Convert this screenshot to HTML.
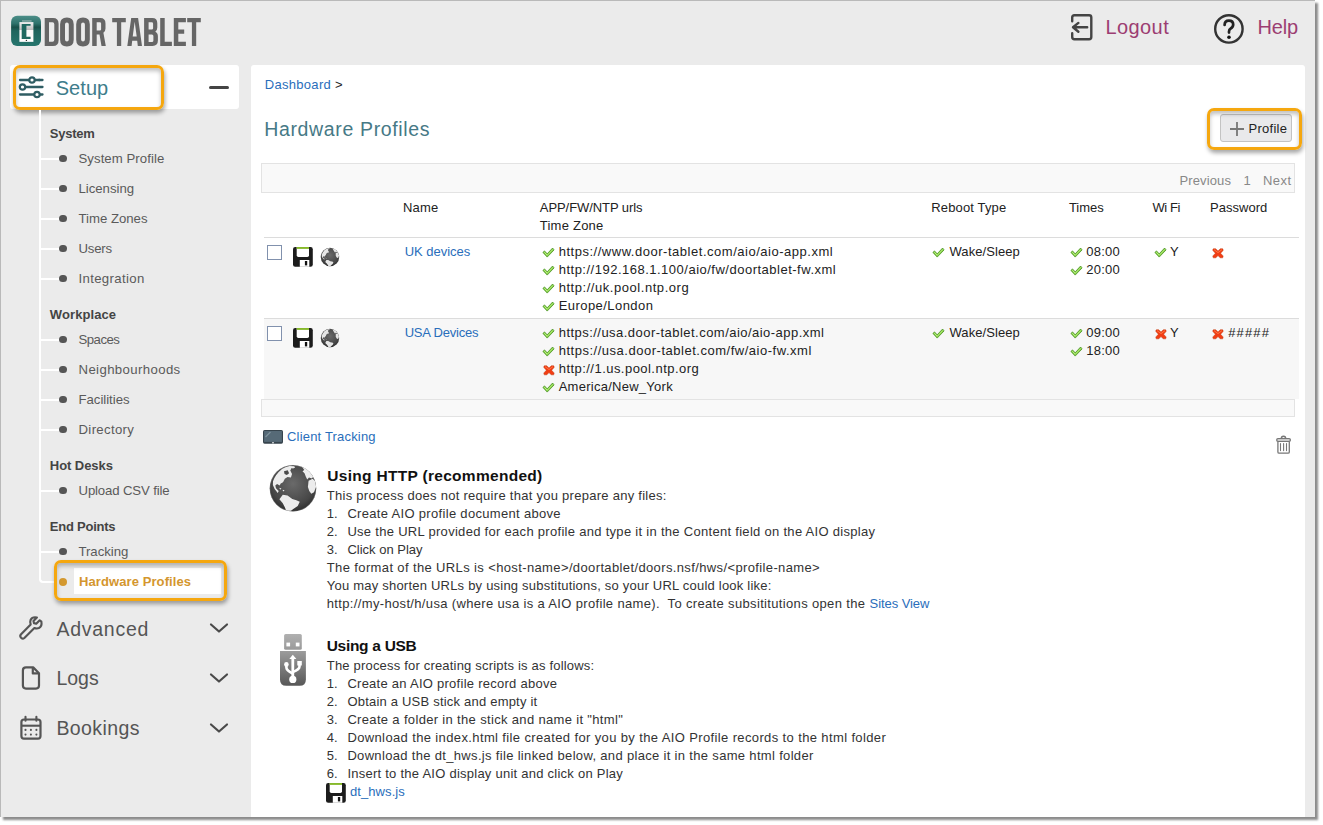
<!DOCTYPE html>
<html><head><meta charset="utf-8"><title>Hardware Profiles</title>
<style>
*{box-sizing:border-box;margin:0;padding:0}
html,body{width:1323px;height:825px;overflow:hidden;background:#fff;font-family:"Liberation Sans",sans-serif}
.abs{position:absolute}
.t{position:absolute;white-space:nowrap;line-height:1}
#frame{position:absolute;left:0;top:0;width:1315px;height:817px;background:#ebebeb;border-top:1px solid #b9b9b9;border-left:1px solid #b9b9b9;box-shadow:3px 3px 2px rgba(0,0,0,.45)}
.card{position:absolute;left:10px;top:65px;width:229px;height:44px;background:#fff;border-radius:3px}
.hl{position:absolute;border:3px solid #f5a70f;border-radius:7px;box-shadow:1px 3px 4px rgba(0,0,0,.35), inset 0 3px 4px rgba(0,0,0,.25)}
#main{position:absolute;left:251px;top:65px;width:1054px;height:752px;background:#fff;border-radius:3px 3px 0 0}
</style></head><body>
<div id="frame"></div>
<svg class="abs" style="left:10px;top:15px" width="32" height="32" viewBox="0 0 32 32">
<defs><linearGradient id="lg1" x1="0" y1="0" x2="0" y2="1"><stop offset="0" stop-color="#4c8e88"/><stop offset=".25" stop-color="#2f746d"/><stop offset=".38" stop-color="#185049"/><stop offset=".5" stop-color="#1f655e"/><stop offset="1" stop-color="#26756d"/></linearGradient>
<linearGradient id="lg2" x1="0" y1="0" x2="0" y2="1"><stop offset="0" stop-color="#f2f2f2"/><stop offset=".38" stop-color="#bdbdbd"/><stop offset=".42" stop-color="#fafafa"/><stop offset="1" stop-color="#fff"/></linearGradient></defs>
<rect x="1.1" y="0.8" width="29.9" height="30.1" rx="6" fill="url(#lg1)"/>
<rect x="9.4" y="7.1" width="14" height="19.75" fill="url(#lg2)"/>
<path d="M11.7 9 H20.6 V10.7 H16.4 V21.8 H20.6 V23.9 H11.7 Z" fill="#1f6961"/>
<circle cx="16.4" cy="25.4" r=".7" fill="#333"/>
<path d="M12.5 6 h1 M14.5 6 h1 M16.5 6 h1 M18.5 6 h1 M20.5 6 h.8" stroke="#d8d8d8" stroke-width="1.6"/>
</svg>
<svg class="abs" style="left:43px;top:16.9px" width="162" height="30" viewBox="0 -1 162 30" overflow="visible"><g fill="#666" fill-rule="evenodd"><path transform="translate(1.7,0)" d="M0,0 H8.3 Q13.9,0 13.9,5.8 V22.2 Q13.9,28 8.3,28 H0 Z M4.3,4.2 V23.8 H7.8 Q9.6,23.8 9.6,21.8 V6.2 Q9.6,4.2 7.8,4.2 Z"/><path transform="translate(17.1,0)" d="M0,6.3 Q0,-0.4 6.8,-0.4 Q13.6,-0.4 13.6,6.3 V21.7 Q13.6,28.4 6.8,28.4 Q0,28.4 0,21.7 Z M4.9,6.4 Q4.9,4.5 6.8,4.5 Q8.7,4.5 8.7,6.4 V21.6 Q8.7,23.5 6.8,23.5 Q4.9,23.5 4.9,21.6 Z"/><path transform="translate(33.2,0)" d="M0,6.3 Q0,-0.4 6.8,-0.4 Q13.6,-0.4 13.6,6.3 V21.7 Q13.6,28.4 6.8,28.4 Q0,28.4 0,21.7 Z M4.9,6.4 Q4.9,4.5 6.8,4.5 Q8.7,4.5 8.7,6.4 V21.6 Q8.7,23.5 6.8,23.5 Q4.9,23.5 4.9,21.6 Z"/><path transform="translate(49.2,0)" d="M0,0 H8.2 Q13.3,0 13.3,5.5 V10.6 Q13.3,13.6 11.2,14.8 L13.6,28 H9.3 L7.3,16.6 H4.5 V28 H0 Z M4.5,4.2 V12.6 H7.6 Q8.9,12.6 8.9,11.2 V5.6 Q8.9,4.2 7.6,4.2 Z"/><path transform="translate(69.2,0)" d="M0,0 H13.6 V4.2 H9.0 V28 H4.7 V4.2 H0 Z"/><path transform="translate(84.3,0)" d="M3.9,0 H10.8 L14.7,28 H10.5 L9.9,22.7 H4.9 L4.3,28 H0 Z M5.4,18.6 H9.4 L7.4,3.8 Z"/><path transform="translate(101.1,0)" d="M0,0 H8.2 Q13.2,0 13.2,5.3 V9.6 Q13.2,12.6 11.2,13.7 Q13.8,14.9 13.8,18.4 V22.6 Q13.8,28 8.4,28 H0 Z M4.5,4.3 V11.6 H7.6 Q9,11.6 9,10.2 V5.7 Q9,4.3 7.6,4.3 Z M4.5,16.4 V24.1 H7.8 Q9.3,24.1 9.3,22.6 V17.9 Q9.3,16.4 7.8,16.4 Z"/><path transform="translate(117.2,0)" d="M0,0 H4.5 V23.8 H11.7 V28 H0 Z"/><path transform="translate(130.8,0)" d="M0,0 H12.1 V4.2 H4.5 V11.6 H10.4 V15.7 H4.5 V23.8 H12.1 V28 H0 Z"/><path transform="translate(144.2,0)" d="M0,0 H13.6 V4.2 H9.0 V28 H4.7 V4.2 H0 Z"/></g></svg>
<svg class="abs" style="left:1069px;top:12px" width="28" height="32" viewBox="0 0 28 32">
<path d="M3.2,9.2 V5.5 Q3.2,3.3 5.4,3.3 H20.1 Q22.3,3.3 22.3,5.5 V25.1 Q22.3,27.3 20.1,27.3 H5.4 Q3.2,27.3 3.2,25.1 V21.3" fill="none" stroke="#444" stroke-width="2.4" stroke-linecap="round"/>
<path d="M18.2,15.3 H4 M9.4,10.9 L4,15.3 L9.4,19.7" fill="none" stroke="#444" stroke-width="2.4" stroke-linecap="round" stroke-linejoin="round"/>
</svg>
<div class="t" style="left:1105.4px;top:17.37px;font-size:20px;color:#9c3d72;letter-spacing:0.425px;">Logout</div>
<svg class="abs" style="left:1212px;top:12px" width="34" height="34" viewBox="0 0 34 34">
<circle cx="16.9" cy="16.9" r="13.7" fill="none" stroke="#333" stroke-width="2.4"/>
<path d="M12.6,12.9 Q12.6,8.6 16.9,8.6 Q21.2,8.6 21.2,12.6 Q21.2,15.2 18.7,16.5 Q17,17.4 17,19.6 V20.6" fill="none" stroke="#222" stroke-width="2.7" stroke-linecap="round"/>
<circle cx="17" cy="25.2" r="1.8" fill="#111"/>
</svg>
<div class="t" style="left:1257.5px;top:17.37px;font-size:20px;color:#9c3d72;letter-spacing:-0.211px;">Help</div>
<div class="card"></div>
<svg class="abs" style="left:17px;top:74px" width="30" height="26" viewBox="0 0 30 26">
<g fill="none" stroke="#2f5d63" stroke-width="2.3" stroke-linecap="round">
<path d="M3 6H22.5M3 13H25.5M3 20.5H25.5"/>
<path d="M22 6H25.5"/>
</g>
<g fill="#fff" stroke="#2f5d63" stroke-width="2.2"><circle cx="15" cy="6" r="2.7"/><circle cx="5.5" cy="13" r="2.7"/><circle cx="20" cy="20.5" r="2.7"/></g>
</svg>
<div class="t" style="left:55.7px;top:78.07px;font-size:20px;color:#3e7d8b;letter-spacing:0.058px;">Setup</div>
<div class="abs" style="left:209px;top:86px;width:20px;height:3px;background:#444;border-radius:1.5px"></div>
<div class="hl" style="left:13px;top:65px;width:151px;height:45px"></div>
<div class="abs" style="left:39px;top:110px;width:2px;height:470px;background:#fff"></div>
<div class="abs" style="left:39px;top:572px;width:15px;height:11px;border-left:2px solid #fff;border-bottom:2px solid #fff;border-bottom-left-radius:4px"></div>
<div class="t" style="left:49.8px;top:126.70px;font-size:13px;color:#444;font-weight:bold;letter-spacing:-0.230px;">System</div>
<div class="t" style="left:49.8px;top:308.00px;font-size:13px;color:#444;font-weight:bold;letter-spacing:0.099px;">Workplace</div>
<div class="t" style="left:49.8px;top:458.80px;font-size:13px;color:#444;font-weight:bold;letter-spacing:-0.060px;">Hot Desks</div>
<div class="t" style="left:49.8px;top:519.80px;font-size:13px;color:#444;font-weight:bold;letter-spacing:-0.232px;">End Points</div>
<div class="abs" style="left:41px;top:157.6px;width:20px;height:2px;background:#fff"></div>
<div class="abs" style="left:59px;top:154.9px;width:7.5px;height:7.5px;border-radius:50%;background:#555"></div>
<div class="t" style="left:78.5px;top:151.63px;font-size:13.2px;color:#5a5a5a;letter-spacing:0.054px;">System Profile</div>
<div class="abs" style="left:41px;top:187.6px;width:20px;height:2px;background:#fff"></div>
<div class="abs" style="left:59px;top:184.9px;width:7.5px;height:7.5px;border-radius:50%;background:#555"></div>
<div class="t" style="left:78.5px;top:181.63px;font-size:13.2px;color:#5a5a5a;letter-spacing:-0.022px;">Licensing</div>
<div class="abs" style="left:41px;top:217.6px;width:20px;height:2px;background:#fff"></div>
<div class="abs" style="left:59px;top:214.9px;width:7.5px;height:7.5px;border-radius:50%;background:#555"></div>
<div class="t" style="left:78.5px;top:211.63px;font-size:13.2px;color:#5a5a5a;letter-spacing:-0.011px;">Time Zones</div>
<div class="abs" style="left:41px;top:247.6px;width:20px;height:2px;background:#fff"></div>
<div class="abs" style="left:59px;top:244.9px;width:7.5px;height:7.5px;border-radius:50%;background:#555"></div>
<div class="t" style="left:78.5px;top:241.63px;font-size:13.2px;color:#5a5a5a;letter-spacing:-0.218px;">Users</div>
<div class="abs" style="left:41px;top:277.6px;width:20px;height:2px;background:#fff"></div>
<div class="abs" style="left:59px;top:274.9px;width:7.5px;height:7.5px;border-radius:50%;background:#555"></div>
<div class="t" style="left:78.5px;top:271.63px;font-size:13.2px;color:#5a5a5a;letter-spacing:0.342px;">Integration</div>
<div class="abs" style="left:41px;top:338.6px;width:20px;height:2px;background:#fff"></div>
<div class="abs" style="left:59px;top:335.9px;width:7.5px;height:7.5px;border-radius:50%;background:#555"></div>
<div class="t" style="left:78.5px;top:332.63px;font-size:13.2px;color:#5a5a5a;letter-spacing:-0.526px;">Spaces</div>
<div class="abs" style="left:41px;top:368.6px;width:20px;height:2px;background:#fff"></div>
<div class="abs" style="left:59px;top:365.9px;width:7.5px;height:7.5px;border-radius:50%;background:#555"></div>
<div class="t" style="left:78.5px;top:362.63px;font-size:13.2px;color:#5a5a5a;letter-spacing:0.379px;">Neighbourhoods</div>
<div class="abs" style="left:41px;top:398.6px;width:20px;height:2px;background:#fff"></div>
<div class="abs" style="left:59px;top:395.9px;width:7.5px;height:7.5px;border-radius:50%;background:#555"></div>
<div class="t" style="left:78.5px;top:392.63px;font-size:13.2px;color:#5a5a5a;letter-spacing:-0.027px;">Facilities</div>
<div class="abs" style="left:41px;top:428.6px;width:20px;height:2px;background:#fff"></div>
<div class="abs" style="left:59px;top:425.9px;width:7.5px;height:7.5px;border-radius:50%;background:#555"></div>
<div class="t" style="left:78.5px;top:422.63px;font-size:13.2px;color:#5a5a5a;letter-spacing:0.336px;">Directory</div>
<div class="abs" style="left:41px;top:489.6px;width:20px;height:2px;background:#fff"></div>
<div class="abs" style="left:59px;top:486.9px;width:7.5px;height:7.5px;border-radius:50%;background:#555"></div>
<div class="t" style="left:78.5px;top:483.63px;font-size:13.2px;color:#5a5a5a;letter-spacing:-0.142px;">Upload CSV file</div>
<div class="abs" style="left:41px;top:550.6px;width:20px;height:2px;background:#fff"></div>
<div class="abs" style="left:59px;top:547.9px;width:7.5px;height:7.5px;border-radius:50%;background:#555"></div>
<div class="t" style="left:78.5px;top:544.63px;font-size:13.2px;color:#5a5a5a;letter-spacing:-0.047px;">Tracking</div>
<div class="abs" style="left:74px;top:568px;width:147px;height:26px;background:#fff"></div>
<div class="abs" style="left:59.2px;top:577.6px;width:8.2px;height:8.2px;border-radius:50%;background:#d4992f"></div>
<div class="t" style="left:78.9px;top:575.00px;font-size:13px;color:#d4962e;font-weight:bold;letter-spacing:0.103px;">Hardware Profiles</div>
<div class="hl" style="left:54px;top:560.2px;width:172.8px;height:40.4px"></div>
<div class="t" style="left:56.4px;top:619.79px;font-size:19.5px;color:#555;letter-spacing:0.752px;">Advanced</div>
<svg class="abs" style="left:208px;top:622.3px" width="22" height="12" viewBox="0 0 22 12"><path d="M3 2.5 L11 9.5 L19 2.5" fill="none" stroke="#4a4a4a" stroke-width="2.2" stroke-linecap="round" stroke-linejoin="round"/></svg>
<div class="t" style="left:56.4px;top:669.49px;font-size:19.5px;color:#555;">Logs</div>
<svg class="abs" style="left:208px;top:672.0px" width="22" height="12" viewBox="0 0 22 12"><path d="M3 2.5 L11 9.5 L19 2.5" fill="none" stroke="#4a4a4a" stroke-width="2.2" stroke-linecap="round" stroke-linejoin="round"/></svg>
<div class="t" style="left:56.4px;top:719.49px;font-size:19.5px;color:#555;letter-spacing:0.411px;">Bookings</div>
<svg class="abs" style="left:208px;top:722.0px" width="22" height="12" viewBox="0 0 22 12"><path d="M3 2.5 L11 9.5 L19 2.5" fill="none" stroke="#4a4a4a" stroke-width="2.2" stroke-linecap="round" stroke-linejoin="round"/></svg>
<svg class="abs" style="left:17px;top:614px" width="28" height="28" viewBox="0 0 28 28">
<path transform="translate(13.4,13.7) scale(.93) translate(-13.5,-13.5)" d="M23.5 5.5 L19.8 9.2 L17.4 8.6 L16.8 6.2 L20.5 2.5 Q15.5 1.5 13.7 5.2 Q12.8 7.5 13.8 10 L3.2 20.8 Q1.8 22.5 3.5 24.3 Q5.3 26 7 24.6 L17.8 13.8 Q20.3 14.8 22.6 13.9 Q26.3 12.1 25.3 7 Z" fill="none" stroke="#555" stroke-width="2.3" stroke-linejoin="round"/>
</svg>
<svg class="abs" style="left:19px;top:664px" width="24" height="28" viewBox="0 0 24 28">
<path d="M7,3.4 H14.2 L20,9.2 V21.6 Q20,24.6 17,24.6 H7 Q3.9,24.6 3.9,21.6 V6.4 Q3.9,3.4 7,3.4 Z" fill="none" stroke="#555" stroke-width="2.2" stroke-linejoin="round"/>
<path d="M13.8,3.6 V9.4 H19.8" fill="none" stroke="#555" stroke-width="2.2" stroke-linejoin="round"/>
</svg>
<svg class="abs" style="left:18px;top:714px" width="28" height="28" viewBox="0 0 28 28">
<rect x="3.4" y="5.5" width="19.1" height="19.2" rx="2.6" fill="none" stroke="#555" stroke-width="2.2"/>
<path d="M3.4,11.7 H22.5" stroke="#555" stroke-width="2.1"/>
<path d="M7.5,2.8 V6.8 M18.4,2.8 V6.8" stroke="#555" stroke-width="2.1" stroke-linecap="round"/>
<g fill="#555"><circle cx="7.5" cy="15.9" r="1.05"/><circle cx="12.9" cy="15.9" r="1.05"/><circle cx="18.4" cy="15.9" r="1.05"/><circle cx="7.5" cy="20.6" r="1.05"/><circle cx="12.9" cy="20.6" r="1.05"/><circle cx="18.4" cy="20.6" r="1.05"/></g>
</svg>
<div id="main"></div>
<div class="t" style="left:264.7px;top:77.80px;font-size:13px;color:#2a6ebb;letter-spacing:0.313px;">Dashboard</div>
<div class="t" style="left:335.0px;top:77.80px;font-size:13px;color:#222;">&gt;</div>
<div class="t" style="left:264.2px;top:120.29px;font-size:19.5px;color:#467986;letter-spacing:0.651px;">Hardware Profiles</div>
<div class="abs" style="left:1220px;top:114px;width:72px;height:28px;background:#e9e9eb;border:1px solid #c3c3c3;border-radius:3px"></div>
<svg class="abs" style="left:1229px;top:121px" width="16" height="16" viewBox="0 0 16 16"><path d="M8 1V15M1 8H15" stroke="#777" stroke-width="1.8"/></svg>
<div class="t" style="left:1248.5px;top:122.00px;font-size:13px;color:#222;letter-spacing:0.275px;">Profile</div>
<div class="hl" style="left:1206.7px;top:108.2px;width:95.7px;height:41.5px"></div>
<div class="abs" style="left:261px;top:163px;width:1034px;height:30px;background:#f9f9f9;border:1px solid #e3e3e3"></div>
<div class="t" style="left:1179.4px;top:173.80px;font-size:13px;color:#888;letter-spacing:0.131px;">Previous</div>
<div class="t" style="left:1243.6px;top:173.80px;font-size:13px;color:#888;">1</div>
<div class="t" style="left:1263.0px;top:173.80px;font-size:13px;color:#888;letter-spacing:0.423px;">Next</div>
<div class="t" style="left:403.1px;top:200.80px;font-size:13px;color:#222;letter-spacing:0.140px;">Name</div>
<div class="t" style="left:539.8px;top:200.80px;font-size:13px;color:#222;letter-spacing:-0.070px;">APP/FW/NTP urls</div>
<div class="t" style="left:931.3px;top:200.80px;font-size:13px;color:#222;letter-spacing:0.142px;">Reboot Type</div>
<div class="t" style="left:1068.9px;top:200.80px;font-size:13px;color:#222;letter-spacing:-0.027px;">Times</div>
<div class="t" style="left:1152.4px;top:200.80px;font-size:13px;color:#222;letter-spacing:-0.400px;">Wi Fi</div>
<div class="t" style="left:1210.0px;top:200.80px;font-size:13px;color:#222;letter-spacing:0.031px;">Password</div>
<div class="t" style="left:539.8px;top:218.60px;font-size:13px;color:#222;letter-spacing:0.231px;">Time Zone</div>
<div class="abs" style="left:264px;top:237px;width:1035px;height:1px;background:#dcdcdc"></div>
<div class="abs" style="left:264px;top:318px;width:1035px;height:81px;background:#f7f7f7;border-top:1px solid #dcdcdc"></div>
<div class="abs" style="left:261px;top:399px;width:1034px;height:18px;background:#f9f9f9;border:1px solid #e3e3e3"></div>
<div class="abs" style="left:267px;top:245px;width:15px;height:15px;border:1px solid #8191ad;background:#fff"></div>
<svg class="abs" style="left:293px;top:247px" width="20" height="20" viewBox="0 0 20 20">
<rect x="0" y="0" width="19.8" height="19.8" rx="2.2" fill="#1c1c1c"/>
<path d="M3.7,0 H16 V8.3 Q16,10 14.3,10 H5.4 Q3.7,10 3.7,8.3 Z" fill="#fff"/>
<rect x="3.7" y="0" width="12.3" height="1.9" fill="#86b92a"/>
<rect x="6.8" y="13" width="9.5" height="6.8" fill="#fff"/>
<rect x="11.9" y="14" width="2.3" height="4.4" fill="#111"/>
</svg>
<svg class="abs" style="left:316px;top:243px" width="28" height="28" viewBox="0 0 825 825">
<circle cx="412" cy="412" r="272" fill="url(#bg)"/>
<g clip-path="url(#sgc)"><g transform="translate(412,412) scale(.793) rotate(-8) translate(-412,-402)" fill="#e6e6e6">
<path d="M118,300 Q150,200 250,118 L300,92 L362,74 L432,78 L442,100 L412,112 L392,102 L372,140 L398,192 L382,242 L332,236 L292,262 L266,312 L232,332 L216,362 L178,338 L152,362 L162,402 L202,442 L188,470 L142,412 L116,352 Z"/>
<path d="M545,82 Q650,120 712,232 L688,258 L648,242 L622,272 L602,232 L582,182 L552,152 L578,132 Z"/>
<path d="M642,292 L702,262 L742,302 L752,382 L722,462 L682,482 L652,442 L632,382 Z"/>
<path d="M212,562 L262,498 L332,508 L402,558 L462,578 L512,602 L482,662 L422,702 L382,732 L312,732 L292,682 L262,622 Z"/>
<path d="M215,395 L240,405 L235,420 L215,412 Z M262,425 L285,432 L280,448 L262,440 Z"/>
</g></g>
</svg>
<div class="t" style="left:404.7px;top:244.70px;font-size:13px;color:#2a6ebb;letter-spacing:-0.028px;">UK devices</div>
<svg class="abs" style="left:540.0px;top:244.0px" width="18" height="16" viewBox="0 0 18 16"><path d="M2.9,8.4 L4.5,6.9 L7.2,9.8 L12.6,4.0 L14.1,5.9 L7.2,13.1 Z" fill="#79c83a" stroke="#3f8a1a" stroke-width=".7" stroke-linejoin="round"/><path d="M4.3,8.2 L7.2,11.3 L13,5.3" fill="none" stroke="#c6f58c" stroke-width=".9"/></svg>
<div class="t" style="left:558.7px;top:244.70px;font-size:13px;color:#222;letter-spacing:0.520px;">https://www.door-tablet.com/aio/aio-app.xml</div>
<svg class="abs" style="left:540.0px;top:262.0px" width="18" height="16" viewBox="0 0 18 16"><path d="M2.9,8.4 L4.5,6.9 L7.2,9.8 L12.6,4.0 L14.1,5.9 L7.2,13.1 Z" fill="#79c83a" stroke="#3f8a1a" stroke-width=".7" stroke-linejoin="round"/><path d="M4.3,8.2 L7.2,11.3 L13,5.3" fill="none" stroke="#c6f58c" stroke-width=".9"/></svg>
<div class="t" style="left:558.7px;top:262.70px;font-size:13px;color:#222;letter-spacing:0.498px;">http://192.168.1.100/aio/fw/doortablet-fw.xml</div>
<svg class="abs" style="left:540.0px;top:280.0px" width="18" height="16" viewBox="0 0 18 16"><path d="M2.9,8.4 L4.5,6.9 L7.2,9.8 L12.6,4.0 L14.1,5.9 L7.2,13.1 Z" fill="#79c83a" stroke="#3f8a1a" stroke-width=".7" stroke-linejoin="round"/><path d="M4.3,8.2 L7.2,11.3 L13,5.3" fill="none" stroke="#c6f58c" stroke-width=".9"/></svg>
<div class="t" style="left:558.7px;top:280.70px;font-size:13px;color:#222;letter-spacing:0.546px;">http://uk.pool.ntp.org</div>
<svg class="abs" style="left:540.0px;top:298.0px" width="18" height="16" viewBox="0 0 18 16"><path d="M2.9,8.4 L4.5,6.9 L7.2,9.8 L12.6,4.0 L14.1,5.9 L7.2,13.1 Z" fill="#79c83a" stroke="#3f8a1a" stroke-width=".7" stroke-linejoin="round"/><path d="M4.3,8.2 L7.2,11.3 L13,5.3" fill="none" stroke="#c6f58c" stroke-width=".9"/></svg>
<div class="t" style="left:558.7px;top:298.70px;font-size:13px;color:#222;letter-spacing:0.445px;">Europe/London</div>
<svg class="abs" style="left:930.0px;top:244.0px" width="18" height="16" viewBox="0 0 18 16"><path d="M2.9,8.4 L4.5,6.9 L7.2,9.8 L12.6,4.0 L14.1,5.9 L7.2,13.1 Z" fill="#79c83a" stroke="#3f8a1a" stroke-width=".7" stroke-linejoin="round"/><path d="M4.3,8.2 L7.2,11.3 L13,5.3" fill="none" stroke="#c6f58c" stroke-width=".9"/></svg>
<div class="t" style="left:949.5px;top:244.70px;font-size:13px;color:#222;letter-spacing:0.077px;">Wake/Sleep</div>
<svg class="abs" style="left:1068.4px;top:244.0px" width="18" height="16" viewBox="0 0 18 16"><path d="M2.9,8.4 L4.5,6.9 L7.2,9.8 L12.6,4.0 L14.1,5.9 L7.2,13.1 Z" fill="#79c83a" stroke="#3f8a1a" stroke-width=".7" stroke-linejoin="round"/><path d="M4.3,8.2 L7.2,11.3 L13,5.3" fill="none" stroke="#c6f58c" stroke-width=".9"/></svg>
<div class="t" style="left:1086.3px;top:244.70px;font-size:13px;color:#222;letter-spacing:0.242px;">08:00</div>
<svg class="abs" style="left:1068.4px;top:262.0px" width="18" height="16" viewBox="0 0 18 16"><path d="M2.9,8.4 L4.5,6.9 L7.2,9.8 L12.6,4.0 L14.1,5.9 L7.2,13.1 Z" fill="#79c83a" stroke="#3f8a1a" stroke-width=".7" stroke-linejoin="round"/><path d="M4.3,8.2 L7.2,11.3 L13,5.3" fill="none" stroke="#c6f58c" stroke-width=".9"/></svg>
<div class="t" style="left:1086.3px;top:262.70px;font-size:13px;color:#222;letter-spacing:0.242px;">20:00</div>
<svg class="abs" style="left:1152.1px;top:244.0px" width="18" height="16" viewBox="0 0 18 16"><path d="M2.9,8.4 L4.5,6.9 L7.2,9.8 L12.6,4.0 L14.1,5.9 L7.2,13.1 Z" fill="#79c83a" stroke="#3f8a1a" stroke-width=".7" stroke-linejoin="round"/><path d="M4.3,8.2 L7.2,11.3 L13,5.3" fill="none" stroke="#c6f58c" stroke-width=".9"/></svg>
<div class="t" style="left:1170.0px;top:244.70px;font-size:13px;color:#222;">Y</div>
<svg class="abs" style="left:1208.0px;top:244.0px" width="18" height="16" viewBox="0 0 18 16"><path d="M4.9,5.2 L5.5,4.7 L7.6,4.7 L10,6.9 L12.4,4.7 L14.5,4.7 L15.05,5.2 L15.05,6.6 L12.6,9.2 L15.05,11.9 L15.05,13.3 L14.4,13.85 L12.2,13.85 L10,11.6 L7.8,13.85 L5.6,13.85 L4.9,13.3 L4.9,11.9 L7.4,9.2 L4.9,6.6 Z" fill="#f23d14" stroke="#b83000" stroke-width=".45" stroke-linejoin="round"/><path d="M6,5.6 L10,8.6 L14,5.6" fill="none" stroke="#ff8550" stroke-width=".8"/></svg>
<div class="abs" style="left:267px;top:326px;width:15px;height:15px;border:1px solid #8191ad;background:#fff"></div>
<svg class="abs" style="left:293px;top:328px" width="20" height="20" viewBox="0 0 20 20">
<rect x="0" y="0" width="19.8" height="19.8" rx="2.2" fill="#1c1c1c"/>
<path d="M3.7,0 H16 V8.3 Q16,10 14.3,10 H5.4 Q3.7,10 3.7,8.3 Z" fill="#fff"/>
<rect x="3.7" y="0" width="12.3" height="1.9" fill="#86b92a"/>
<rect x="6.8" y="13" width="9.5" height="6.8" fill="#fff"/>
<rect x="11.9" y="14" width="2.3" height="4.4" fill="#111"/>
</svg>
<svg class="abs" style="left:316px;top:324px" width="28" height="28" viewBox="0 0 825 825">
<circle cx="412" cy="412" r="272" fill="url(#bg)"/>
<g clip-path="url(#sgc)"><g transform="translate(412,412) scale(.793) rotate(-8) translate(-412,-402)" fill="#e6e6e6">
<path d="M118,300 Q150,200 250,118 L300,92 L362,74 L432,78 L442,100 L412,112 L392,102 L372,140 L398,192 L382,242 L332,236 L292,262 L266,312 L232,332 L216,362 L178,338 L152,362 L162,402 L202,442 L188,470 L142,412 L116,352 Z"/>
<path d="M545,82 Q650,120 712,232 L688,258 L648,242 L622,272 L602,232 L582,182 L552,152 L578,132 Z"/>
<path d="M642,292 L702,262 L742,302 L752,382 L722,462 L682,482 L652,442 L632,382 Z"/>
<path d="M212,562 L262,498 L332,508 L402,558 L462,578 L512,602 L482,662 L422,702 L382,732 L312,732 L292,682 L262,622 Z"/>
<path d="M215,395 L240,405 L235,420 L215,412 Z M262,425 L285,432 L280,448 L262,440 Z"/>
</g></g>
</svg>
<div class="t" style="left:404.7px;top:325.60px;font-size:13px;color:#2a6ebb;letter-spacing:-0.206px;">USA Devices</div>
<svg class="abs" style="left:540.0px;top:324.9px" width="18" height="16" viewBox="0 0 18 16"><path d="M2.9,8.4 L4.5,6.9 L7.2,9.8 L12.6,4.0 L14.1,5.9 L7.2,13.1 Z" fill="#79c83a" stroke="#3f8a1a" stroke-width=".7" stroke-linejoin="round"/><path d="M4.3,8.2 L7.2,11.3 L13,5.3" fill="none" stroke="#c6f58c" stroke-width=".9"/></svg>
<div class="t" style="left:558.7px;top:325.60px;font-size:13px;color:#222;letter-spacing:0.465px;">https://usa.door-tablet.com/aio/aio-app.xml</div>
<svg class="abs" style="left:540.0px;top:342.9px" width="18" height="16" viewBox="0 0 18 16"><path d="M2.9,8.4 L4.5,6.9 L7.2,9.8 L12.6,4.0 L14.1,5.9 L7.2,13.1 Z" fill="#79c83a" stroke="#3f8a1a" stroke-width=".7" stroke-linejoin="round"/><path d="M4.3,8.2 L7.2,11.3 L13,5.3" fill="none" stroke="#c6f58c" stroke-width=".9"/></svg>
<div class="t" style="left:558.7px;top:343.60px;font-size:13px;color:#222;letter-spacing:0.517px;">https://usa.door-tablet.com/fw/aio-fw.xml</div>
<svg class="abs" style="left:539.0px;top:360.9px" width="18" height="16" viewBox="0 0 18 16"><path d="M4.9,5.2 L5.5,4.7 L7.6,4.7 L10,6.9 L12.4,4.7 L14.5,4.7 L15.05,5.2 L15.05,6.6 L12.6,9.2 L15.05,11.9 L15.05,13.3 L14.4,13.85 L12.2,13.85 L10,11.6 L7.8,13.85 L5.6,13.85 L4.9,13.3 L4.9,11.9 L7.4,9.2 L4.9,6.6 Z" fill="#f23d14" stroke="#b83000" stroke-width=".45" stroke-linejoin="round"/><path d="M6,5.6 L10,8.6 L14,5.6" fill="none" stroke="#ff8550" stroke-width=".8"/></svg>
<div class="t" style="left:558.7px;top:361.60px;font-size:13px;color:#222;letter-spacing:0.462px;">http://1.us.pool.ntp.org</div>
<svg class="abs" style="left:540.0px;top:378.9px" width="18" height="16" viewBox="0 0 18 16"><path d="M2.9,8.4 L4.5,6.9 L7.2,9.8 L12.6,4.0 L14.1,5.9 L7.2,13.1 Z" fill="#79c83a" stroke="#3f8a1a" stroke-width=".7" stroke-linejoin="round"/><path d="M4.3,8.2 L7.2,11.3 L13,5.3" fill="none" stroke="#c6f58c" stroke-width=".9"/></svg>
<div class="t" style="left:558.7px;top:379.60px;font-size:13px;color:#222;letter-spacing:0.262px;">America/New_York</div>
<svg class="abs" style="left:930.0px;top:324.9px" width="18" height="16" viewBox="0 0 18 16"><path d="M2.9,8.4 L4.5,6.9 L7.2,9.8 L12.6,4.0 L14.1,5.9 L7.2,13.1 Z" fill="#79c83a" stroke="#3f8a1a" stroke-width=".7" stroke-linejoin="round"/><path d="M4.3,8.2 L7.2,11.3 L13,5.3" fill="none" stroke="#c6f58c" stroke-width=".9"/></svg>
<div class="t" style="left:949.5px;top:325.60px;font-size:13px;color:#222;letter-spacing:0.077px;">Wake/Sleep</div>
<svg class="abs" style="left:1068.4px;top:324.9px" width="18" height="16" viewBox="0 0 18 16"><path d="M2.9,8.4 L4.5,6.9 L7.2,9.8 L12.6,4.0 L14.1,5.9 L7.2,13.1 Z" fill="#79c83a" stroke="#3f8a1a" stroke-width=".7" stroke-linejoin="round"/><path d="M4.3,8.2 L7.2,11.3 L13,5.3" fill="none" stroke="#c6f58c" stroke-width=".9"/></svg>
<div class="t" style="left:1086.3px;top:325.60px;font-size:13px;color:#222;letter-spacing:0.242px;">09:00</div>
<svg class="abs" style="left:1068.4px;top:342.9px" width="18" height="16" viewBox="0 0 18 16"><path d="M2.9,8.4 L4.5,6.9 L7.2,9.8 L12.6,4.0 L14.1,5.9 L7.2,13.1 Z" fill="#79c83a" stroke="#3f8a1a" stroke-width=".7" stroke-linejoin="round"/><path d="M4.3,8.2 L7.2,11.3 L13,5.3" fill="none" stroke="#c6f58c" stroke-width=".9"/></svg>
<div class="t" style="left:1086.3px;top:343.60px;font-size:13px;color:#222;letter-spacing:0.242px;">18:00</div>
<svg class="abs" style="left:1151.1px;top:324.9px" width="18" height="16" viewBox="0 0 18 16"><path d="M4.9,5.2 L5.5,4.7 L7.6,4.7 L10,6.9 L12.4,4.7 L14.5,4.7 L15.05,5.2 L15.05,6.6 L12.6,9.2 L15.05,11.9 L15.05,13.3 L14.4,13.85 L12.2,13.85 L10,11.6 L7.8,13.85 L5.6,13.85 L4.9,13.3 L4.9,11.9 L7.4,9.2 L4.9,6.6 Z" fill="#f23d14" stroke="#b83000" stroke-width=".45" stroke-linejoin="round"/><path d="M6,5.6 L10,8.6 L14,5.6" fill="none" stroke="#ff8550" stroke-width=".8"/></svg>
<div class="t" style="left:1170.0px;top:325.60px;font-size:13px;color:#222;">Y</div>
<svg class="abs" style="left:1208.0px;top:324.9px" width="18" height="16" viewBox="0 0 18 16"><path d="M4.9,5.2 L5.5,4.7 L7.6,4.7 L10,6.9 L12.4,4.7 L14.5,4.7 L15.05,5.2 L15.05,6.6 L12.6,9.2 L15.05,11.9 L15.05,13.3 L14.4,13.85 L12.2,13.85 L10,11.6 L7.8,13.85 L5.6,13.85 L4.9,13.3 L4.9,11.9 L7.4,9.2 L4.9,6.6 Z" fill="#f23d14" stroke="#b83000" stroke-width=".45" stroke-linejoin="round"/><path d="M6,5.6 L10,8.6 L14,5.6" fill="none" stroke="#ff8550" stroke-width=".8"/></svg>
<div class="t" style="left:1228.2px;top:325.60px;font-size:13px;color:#222;letter-spacing:1.162px;">#####</div>
<svg class="abs" style="left:263px;top:430px" width="20" height="14" viewBox="0 0 20 14">
<rect x="0" y="0" width="20" height="13.7" rx="1.6" fill="#37444d"/>
<rect x="1.1" y="1" width="17.8" height="10.9" fill="#566a77"/>
<path d="M2.5,7 L7.5,2" stroke="#8fa2ad" stroke-width="1.2" opacity=".7"/>
<rect x="9" y="12.1" width="2" height="1.3" fill="#c8cdd0"/>
</svg>
<div class="t" style="left:287.0px;top:429.70px;font-size:13px;color:#2a6ebb;letter-spacing:0.187px;">Client Tracking</div>
<svg class="abs" style="left:1266px;top:428px" width="34" height="34" viewBox="0 0 34 34">
<path d="M15.3,10.8 Q15.3,8.3 17.5,8.3 Q19.7,8.3 19.7,10.8" fill="none" stroke="#777" stroke-width="1.4"/>
<rect x="10.7" y="10.7" width="13.7" height="2.6" rx="1.3" fill="#e4e4e4" stroke="#777" stroke-width="1.3"/>
<path d="M11.9,13.6 V24 Q11.9,25.2 13.1,25.2 H22 Q23.3,25.2 23.3,24 V13.6" fill="none" stroke="#777" stroke-width="1.3"/>
<path d="M14.5,15.5 V22.6 M17.6,15.5 V22.6 M20.5,15.5 V22.6" stroke="#777" stroke-width="1.1" stroke-linecap="round"/>
</svg>
<svg class="abs" style="left:265px;top:461px" width="56" height="56" viewBox="0 0 825 825">
<defs><radialGradient id="bg" cx=".5" cy=".4" r=".6"><stop offset="0" stop-color="#6a6a6a"/><stop offset=".75" stop-color="#474747"/><stop offset="1" stop-color="#2e2e2e"/></radialGradient>
<clipPath id="sgc"><circle cx="412" cy="412" r="272"/></clipPath><clipPath id="bgc"><circle cx="412" cy="402" r="343"/></clipPath>
</defs>
<circle cx="412" cy="402" r="343" fill="url(#bg)"/>
<g fill="#ececec" clip-path="url(#bgc)">
<path d="M118,300 Q150,200 250,118 L300,92 L362,74 L432,78 L442,100 L412,112 L392,102 L372,140 L398,192 L382,242 L332,236 L292,262 L266,312 L232,332 L216,362 L178,338 L152,362 L162,402 L202,442 L188,470 L142,412 L116,352 Z"/>
<path d="M545,82 Q650,120 712,232 L688,258 L648,242 L622,272 L602,232 L582,182 L552,152 L578,132 Z"/>
<path d="M642,292 L702,262 L742,302 L752,382 L722,462 L682,482 L652,442 L632,382 Z"/>
<path d="M212,562 L262,498 L332,508 L402,558 L462,578 L512,602 L482,662 L422,702 L382,732 L312,732 L292,682 L262,622 Z"/>
<path d="M215,395 L240,405 L235,420 L215,412 Z M262,425 L285,432 L280,448 L262,440 Z"/>
</g>
<path d="M280,150 L335,135 L355,180 L322,205 L288,192 Z" fill="#4a4a4a"/>
<circle cx="412" cy="402" r="340" fill="none" stroke="#e8e8e8" stroke-width="6" opacity=".5"/>
</svg>
<div class="t" style="left:327.3px;top:467.68px;font-size:15.5px;color:#111;font-weight:bold;letter-spacing:0.298px;">Using HTTP (recommended)</div>
<div class="t" style="left:326.8px;top:488.80px;font-size:13px;color:#333;letter-spacing:0.270px;">This process does not require that you prepare any files:</div>
<div class="t" style="left:326.8px;top:506.75px;font-size:13px;color:#333;">1.</div>
<div class="t" style="left:347.4px;top:506.75px;font-size:13px;color:#333;letter-spacing:0.317px;">Create AIO profile document above</div>
<div class="t" style="left:326.8px;top:524.70px;font-size:13px;color:#333;">2.</div>
<div class="t" style="left:347.4px;top:524.70px;font-size:13px;color:#333;letter-spacing:0.294px;">Use the URL provided for each profile and type it in the Content field on the AIO display</div>
<div class="t" style="left:326.8px;top:542.65px;font-size:13px;color:#333;">3.</div>
<div class="t" style="left:347.4px;top:542.65px;font-size:13px;color:#333;">Click on Play</div>
<div class="t" style="left:326.8px;top:560.60px;font-size:13px;color:#333;letter-spacing:0.372px;">The format of the URLs is &lt;host-name&gt;/doortablet/doors.nsf/hws/&lt;profile-name&gt;</div>
<div class="t" style="left:326.8px;top:578.55px;font-size:13px;color:#333;letter-spacing:0.216px;">You may shorten URLs by using substitutions, so your URL could look like:</div>
<div class="t" style="left:326.8px;top:596.50px;font-size:13px;color:#333;letter-spacing:0.342px;white-space:pre;">http://my-host/h/usa (where usa is a AIO profile name).  To create subsititutions open the</div>
<div class="t" style="left:869.6px;top:596.50px;font-size:13px;color:#2a6ebb;letter-spacing:-0.073px;">Sites View</div>
<svg class="abs" style="left:278px;top:632px" width="30" height="56" viewBox="0 0 30 56">
<defs><linearGradient id="ub" x1="0" y1="0" x2="0" y2="1"><stop offset="0" stop-color="#9c9c9c"/><stop offset="1" stop-color="#575757"/></linearGradient>
<linearGradient id="uc" x1="0" y1="0" x2="0" y2="1"><stop offset="0" stop-color="#b0b0b0"/><stop offset="1" stop-color="#9a9a9a"/></linearGradient></defs>
<rect x="6.1" y="2" width="17.7" height="15.8" rx="1.6" fill="url(#uc)"/>
<rect x="8.4" y="10.6" width="3.7" height="3.8" fill="#fff"/><rect x="17.8" y="10.6" width="3.7" height="3.8" fill="#fff"/>
<path d="M2,18.9 H27.9 V47.5 Q27.9,53.8 21.6,53.8 H8.3 Q2,53.8 2,47.5 Z" fill="url(#ub)"/>
<path d="M14.8,25.5 V46" stroke="#fff" stroke-width="2.8"/>
<path d="M14.8,22.7 L11.3,26.9 H18.4 Z" fill="#fff"/>
<path d="M8.4,32.4 V35.5 Q8.4,38.5 14.8,41.5" fill="none" stroke="#fff" stroke-width="2.6"/>
<path d="M21.5,32 V34.5 Q21.5,37.5 14.8,40" fill="none" stroke="#fff" stroke-width="2.6"/>
<circle cx="8.4" cy="32.4" r="2.3" fill="#fff"/>
<rect x="19.3" y="29" width="4.5" height="4.5" fill="#fff"/>
<circle cx="14.8" cy="47.4" r="3.6" fill="#fff"/>
</svg>
<div class="t" style="left:326.7px;top:637.68px;font-size:15.5px;color:#111;font-weight:bold;letter-spacing:-0.292px;">Using a USB</div>
<div class="t" style="left:326.8px;top:659.00px;font-size:13px;color:#333;letter-spacing:0.188px;">The process for creating scripts is as follows:</div>
<div class="t" style="left:326.8px;top:676.95px;font-size:13px;color:#333;">1.</div>
<div class="t" style="left:347.4px;top:676.95px;font-size:13px;color:#333;letter-spacing:0.261px;">Create an AIO profile record above</div>
<div class="t" style="left:326.8px;top:694.90px;font-size:13px;color:#333;">2.</div>
<div class="t" style="left:347.4px;top:694.90px;font-size:13px;color:#333;letter-spacing:0.209px;">Obtain a USB stick and empty it</div>
<div class="t" style="left:326.8px;top:712.85px;font-size:13px;color:#333;">3.</div>
<div class="t" style="left:347.4px;top:712.85px;font-size:13px;color:#333;letter-spacing:0.336px;">Create a folder in the stick and name it "html"</div>
<div class="t" style="left:326.8px;top:730.80px;font-size:13px;color:#333;">4.</div>
<div class="t" style="left:347.4px;top:730.80px;font-size:13px;color:#333;letter-spacing:0.374px;">Download the index.html file created for you by the AIO Profile records to the html folder</div>
<div class="t" style="left:326.8px;top:748.75px;font-size:13px;color:#333;">5.</div>
<div class="t" style="left:347.4px;top:748.75px;font-size:13px;color:#333;letter-spacing:0.326px;">Download the dt_hws.js file linked below, and place it in the same html folder</div>
<div class="t" style="left:326.8px;top:766.70px;font-size:13px;color:#333;">6.</div>
<div class="t" style="left:347.4px;top:766.70px;font-size:13px;color:#333;letter-spacing:0.248px;">Insert to the AIO display unit and click on Play</div>
<svg class="abs" style="left:326px;top:783px" width="20" height="20" viewBox="0 0 20 20">
<rect x="0" y="0" width="19.8" height="19.8" rx="2.2" fill="#1c1c1c"/>
<path d="M3.7,0 H16 V8.3 Q16,10 14.3,10 H5.4 Q3.7,10 3.7,8.3 Z" fill="#fff"/>
<rect x="3.7" y="0" width="12.3" height="1.9" fill="#86b92a"/>
<rect x="6.8" y="13" width="9.5" height="6.8" fill="#fff"/>
<rect x="11.9" y="14" width="2.3" height="4.4" fill="#111"/>
</svg>
<div class="t" style="left:350.0px;top:785.00px;font-size:13px;color:#2a6ebb;letter-spacing:0.076px;">dt_hws.js</div>
</body></html>
